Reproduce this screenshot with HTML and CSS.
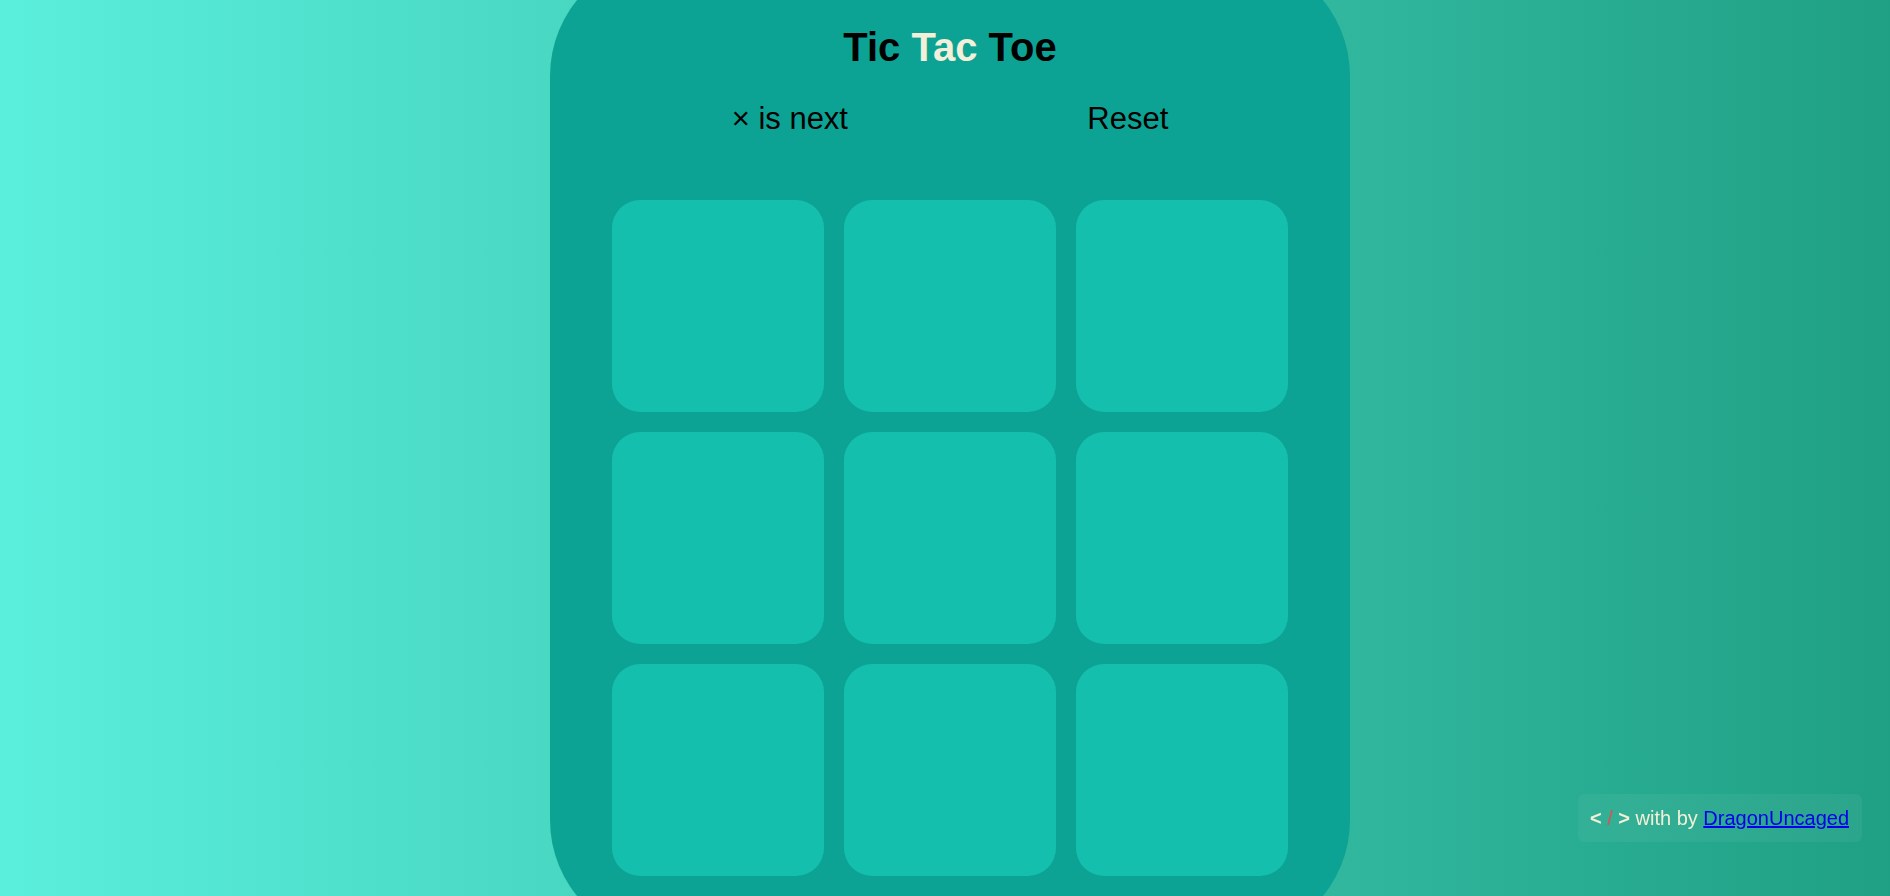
FILE: index.html
```html
<!DOCTYPE html>
<html lang="en">
<head>
<meta charset="utf-8">
<title>Tic Tac Toe</title>
<link rel="stylesheet" href="styles.css">
</head>
<body>
<main class="game">
  <h1 class="title">Tic <span class="accent">Tac</span> Toe</h1>
  <div class="status">
    <span class="next">× is next</span>
    <button class="reset" type="button">Reset</button>
  </div>
  <div class="board">
    <div class="cell"></div>
    <div class="cell"></div>
    <div class="cell"></div>
    <div class="cell"></div>
    <div class="cell"></div>
    <div class="cell"></div>
    <div class="cell"></div>
    <div class="cell"></div>
    <div class="cell"></div>
  </div>
</main>
<footer class="credit">
  <b class="tag">&lt;</b> <span class="slash">/</span> <b class="tag">&gt;</b> with by <a href="#" class="author">DragonUncaged</a>
</footer>
</body>
</html>
```
FILE: styles.css
```css
* { box-sizing: border-box; }
html, body { margin: 0; padding: 0; }
body {
  height: 100vh;
  overflow: hidden;
  display: flex;
  align-items: center;
  justify-content: center;
  padding-left: 10px;
  font-family: "Liberation Sans", Arial, sans-serif;
  background: linear-gradient(to right, #5aefdc, #1fa084);
}
.game {
  width: 800px;
  flex-shrink: 0;
  background: #0ca394;
  border-radius: 120px;
  padding: 68px 62px 64px;
  display: flex;
  flex-direction: column;
  align-items: stretch;
}
.title {
  margin: 0;
  font-size: 40px;
  line-height: 46px;
  font-weight: bold;
  text-align: center;
  color: #000;
}
.accent { color: #f3efd9; }
.status {
  margin-top: 31px;
  height: 36px;
  display: flex;
  justify-content: space-around;
  align-items: center;
  font-size: 31px;
  line-height: 36px;
  color: #000;
}
.next { display: block; }
.reset {
  font: inherit;
  color: inherit;
  background: none;
  border: none;
  padding: 0;
  margin: 0;
  cursor: pointer;
}
.board {
  margin-top: 63px;
  display: grid;
  grid-template-columns: repeat(3, 212px);
  grid-template-rows: repeat(3, 212px);
  gap: 20px;
}
.cell {
  background: #14bfad;
  border-radius: 28px;
}
.credit {
  position: fixed;
  right: 28px;
  bottom: 54px;
  padding: 12px 13px 12px 12px;
  font-size: 20px;
  line-height: 24px;
  color: #f3efd9;
  background: rgba(255, 255, 255, 0.05);
  border-radius: 6px;
}
.slash { color: #e0504a; }
.author { color: #0000ee; text-decoration: underline; }
```
